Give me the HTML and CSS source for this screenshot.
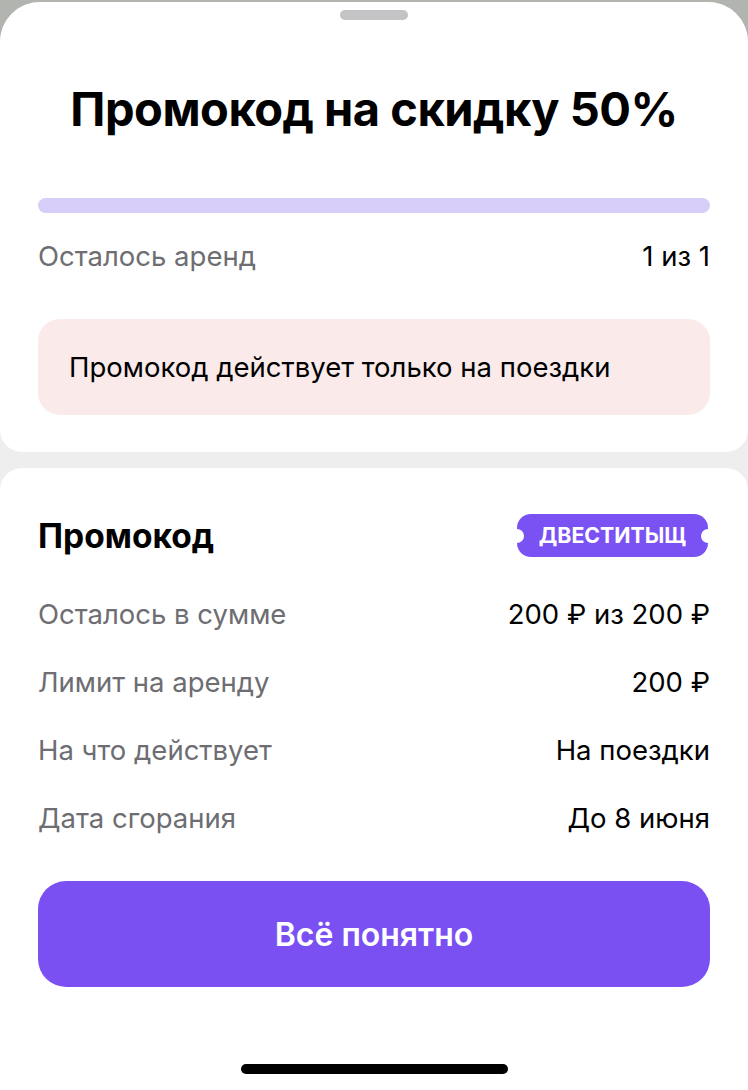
FILE: index.html
```html
<!DOCTYPE html>
<html lang="ru">
<head>
  <meta charset="UTF-8">
  <meta name="viewport" content="width=device-width, initial-scale=1.0">
  <title>Промокод на скидку 50%</title>
  <link rel="stylesheet" href="styles.css">
</head>
<body>
  <div class="sheet">
    <div class="card card-top">
      <div class="grabber"></div>
      <h1>Промокод на скидку 50%</h1>

      <div class="progress"><div class="progress-fill" style="width: 100%"></div></div>
      <div class="row row-rentals">
        <span class="label">Осталось аренд</span>
        <span class="value">1 из 1</span>
      </div>

      <div class="notice">Промокод действует только на поездки</div>
    </div>

    <div class="card card-bottom">
      <div class="head">
        <h2>Промокод</h2>
        <span class="ticket">ДВЕСТИТЫЩ</span>
      </div>

      <div class="row">
        <span class="label">Осталось в сумме</span>
        <span class="value">200 ₽ из 200 ₽</span>
      </div>
      <div class="row">
        <span class="label">Лимит на аренду</span>
        <span class="value">200 ₽</span>
      </div>
      <div class="row">
        <span class="label">На что действует</span>
        <span class="value">На поездки</span>
      </div>
      <div class="row">
        <span class="label">Дата сгорания</span>
        <span class="value">До 8 июня</span>
      </div>

      <button class="btn">Всё понятно</button>

      <div class="home-bar"></div>
    </div>
  </div>
</body>
</html>
```

FILE: styles.css
```css
body {
  margin: 0;
  background-color: #b2b4b0;
  font-family: Inter, 'Noto Sans', sans-serif;
  color: #000;
}
.sheet {
  margin-top: 2px;
  background-color: #eeeeee;
  border-radius: 40px 40px 0 0;
  overflow: hidden;
  height: 1088px;
  display: flex;
  flex-direction: column;
  gap: 16px;
}
.card {
  background-color: #fff;
  padding: 0 38px;
}
.card-top {
  border-radius: 0 0 22px 22px;
  padding-top: 8px;
  padding-bottom: 37px;
}
.card-bottom {
  flex: 1;
  border-radius: 22px 22px 0 0;
  padding-top: 46px;
  display: flex;
  flex-direction: column;
}
.grabber {
  width: 68px;
  height: 10px;
  margin: 0 auto;
  background-color: #c4c4c6;
  border-radius: 5px;
}
h1 {
  margin: 60px 0 0;
  text-align: center;
  font-size: 47px;
  font-weight: 700;
  line-height: 58px;
  letter-spacing: -0.5px;
}
.progress {
  margin-top: 60px;
  height: 15px;
  border-radius: 8px;
  background-color: #ece8fc;
  overflow: hidden;
}
.progress-fill {
  height: 100%;
  background-color: #d6cdf8;
  border-radius: 8px;
}
.row {
  display: flex;
  justify-content: space-between;
  align-items: center;
  height: 68px;
  font-size: 27.5px;
}
.row-rentals {
  margin-top: 9px;
}
.label {
  color: #6d6d72;
}
.notice {
  margin-top: 29px;
  background-color: #fbeaea;
  border-radius: 22px;
  padding: 0 31px;
  height: 96px;
  display: flex;
  align-items: center;
  font-size: 27.5px;
}
.head {
  display: flex;
  justify-content: space-between;
  align-items: center;
  margin-bottom: 23px;
}
h2 {
  margin: 0;
  font-size: 33.5px;
  font-weight: 700;
}
.ticket {
  position: relative;
  background-color: #7a52f4;
  color: #fff;
  font-size: 21.3px;
  font-weight: 700;
  padding: 0 22px;
  height: 43px;
  line-height: 43px;
  border-radius: 14px;
  margin-right: 2px;
}
.ticket::before,
.ticket::after {
  content: '';
  position: absolute;
  top: 50%;
  width: 14px;
  height: 14px;
  margin-top: -7px;
  border-radius: 50%;
  background-color: #fff;
}
.ticket::before {
  left: -7px;
}
.ticket::after {
  right: -7px;
}
.btn {
  margin-top: 29px;
  height: 106px;
  border: none;
  border-radius: 28px;
  background-color: #7a50f3;
  color: #fff;
  font-family: inherit;
  font-size: 32px;
  font-weight: 600;
  cursor: pointer;
}
.home-bar {
  margin: auto auto 16px;
  width: 267px;
  height: 10px;
  border-radius: 5px;
  background-color: #000;
}
```
